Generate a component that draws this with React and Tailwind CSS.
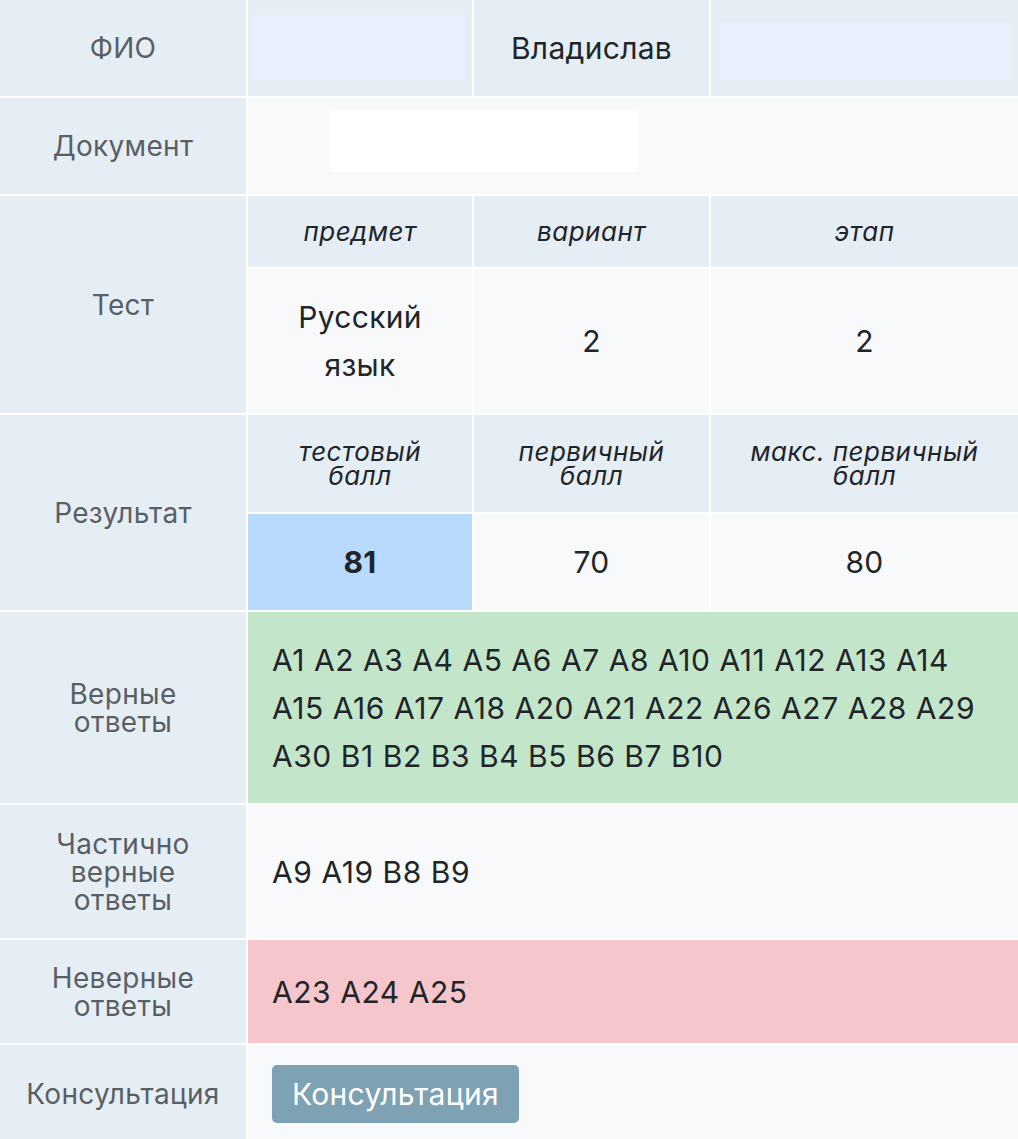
export default function App() {
  const label = "flex items-center justify-center text-center bg-[#e6eef5] text-[#5a5f65] text-[28px] leading-[28px] tracking-[0.3px] px-2";
  const head = "flex items-center justify-center text-center bg-[#e6eef5] text-[#212529] italic text-[26px] leading-[24px] tracking-[0.5px] px-3";
  const cell = "flex items-center justify-center text-center bg-[#f8f9fb] text-[#212529] text-[30px] leading-[48px] tracking-[0.3px]";
  const wide = "col-span-3 flex items-center px-6 text-[#212529] text-[30px] leading-[48px] tracking-[0.55px]";

  return (
    <div className="min-h-screen bg-white font-['Inter',sans-serif]">
      <div className="grid grid-cols-[246px_224px_235px_1fr] grid-rows-[96px_96px_71px_144px_97px_96px_191px_133px_103px_98px] gap-[2px] bg-white">
        {/* ФИО */}
        <div className={label}>ФИО</div>
        <div className="bg-[#e6eef5] pl-[6px] pr-[7px] pt-[14px] pb-[16px]">
          <div className="h-full bg-[#e8f0fd]"></div>
        </div>
        <div className="flex items-center justify-center bg-[#e6eef5] text-[#212529] text-[30px] tracking-[0.3px]">Владислав</div>
        <div className="bg-[#e6eef5] pl-[9px] pr-[8px] pt-[23px] pb-[16px]">
          <div className="h-full bg-[#e8f0fd]"></div>
        </div>

        {/* Документ */}
        <div className={label}>Документ</div>
        <div className="col-span-3 bg-[#f8f9fb] pl-[82px] pt-[12px] pb-[22px]">
          <div className="h-full w-[308px] bg-white"></div>
        </div>

        {/* Тест */}
        <div className={`${label} row-span-2`}>Тест</div>
        <div className={head}>предмет</div>
        <div className={head}>вариант</div>
        <div className={head}>этап</div>
        <div className={cell}>Русский<br />язык</div>
        <div className={cell}>2</div>
        <div className={cell}>2</div>

        {/* Результат */}
        <div className={`${label} row-span-2`}>Результат</div>
        <div className={head}>тестовый<br />балл</div>
        <div className={head}>первичный<br />балл</div>
        <div className={head}>макс. первичный<br />балл</div>
        <div className={`${cell} !bg-[#b8daff] font-bold`}>81</div>
        <div className={cell}>70</div>
        <div className={cell}>80</div>

        {/* Верные ответы */}
        <div className={label}>Верные<br />ответы</div>
        <div className={`${wide} bg-[#c3e6cb]`}>
          <p>
            A1 A2 A3 A4 A5 A6 A7 A8 A10 A11 A12 A13 A14<br />
            A15 A16 A17 A18 A20 A21 A22 A26 A27 A28 A29<br />
            A30 B1 B2 B3 B4 B5 B6 B7 B10
          </p>
        </div>

        {/* Частично верные ответы */}
        <div className={label}>Частично<br />верные<br />ответы</div>
        <div className={`${wide} bg-[#f8f9fb]`}>A9 A19 B8 B9</div>

        {/* Неверные ответы */}
        <div className={label}>Неверные<br />ответы</div>
        <div className={`${wide} bg-[#f5c6cb]`}>A23 A24 A25</div>

        {/* Консультация */}
        <div className={label}>Консультация</div>
        <div className="col-span-3 flex items-center px-6 bg-[#f8f9fb]">
          <button className="h-[58px] px-5 rounded-[5px] bg-[#7fa1b4] text-white text-[30px] tracking-[0.3px]">Консультация</button>
        </div>
      </div>
    </div>
  );
}
